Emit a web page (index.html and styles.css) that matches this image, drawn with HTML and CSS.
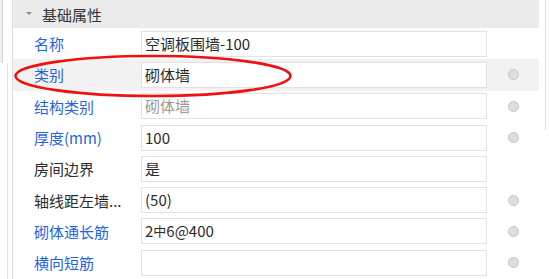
FILE: index.html
```html
<!DOCTYPE html>
<html lang="zh-CN">

<head>
  <meta charset="UTF-8">
  <meta name="viewport" content="width=device-width, initial-scale=1.0">
  <title>属性</title>
  <link rel="stylesheet" href="styles.css">
</head>

<body>

  <div class="page">
    <!-- 左侧边框 -->
    <div class="gutter">
      <div class="gutter-top"></div>
      <div class="gutter-line"></div>
    </div>

    <div class="panel">
      <div class="group-head">
        <span class="caret"></span>
        <span class="group-title">基础属性</span>
      </div>

      <div class="prop-row">
        <div class="prop-label link">名称</div>
        <div class="prop-value">空调板围墙-100</div>
        <div class="prop-flag"></div>
      </div>
      <div class="prop-row active">
        <div class="prop-label link">类别</div>
        <div class="prop-value">砌体墙</div>
        <div class="prop-flag"><span class="dot"></span></div>
      </div>
      <div class="prop-row">
        <div class="prop-label link">结构类别</div>
        <div class="prop-value disabled">砌体墙</div>
        <div class="prop-flag"><span class="dot"></span></div>
      </div>
      <div class="prop-row">
        <div class="prop-label link">厚度(mm)</div>
        <div class="prop-value">100</div>
        <div class="prop-flag"><span class="dot"></span></div>
      </div>
      <div class="prop-row">
        <div class="prop-label">房间边界</div>
        <div class="prop-value">是</div>
        <div class="prop-flag"></div>
      </div>
      <div class="prop-row">
        <div class="prop-label">轴线距左墙...</div>
        <div class="prop-value">(50)</div>
        <div class="prop-flag"><span class="dot"></span></div>
      </div>
      <div class="prop-row">
        <div class="prop-label link">砌体通长筋</div>
        <div class="prop-value">2<span class="steel">中</span>6@400</div>
        <div class="prop-flag"><span class="dot"></span></div>
      </div>
      <div class="prop-row">
        <div class="prop-label link">横向短筋</div>
        <div class="prop-value"></div>
        <div class="prop-flag"><span class="dot"></span></div>
      </div>

      <!-- 手绘的红圈标注 -->
      <svg class="mark" width="290" height="50" viewBox="0 0 290 50">
        <ellipse cx="144" cy="25" rx="137.5" ry="20" fill="none" stroke="#f01010" stroke-width="2.6" />
      </svg>
    </div>

    <!-- 右侧滚动条 -->
    <div class="scroll">
      <div class="scroll-line"></div>
    </div>
  </div>

</body>
</html>
```

FILE: styles.css
```css
body {
  margin: 0;
  background: #fff;
  font-family: "Noto Sans CJK SC", "Noto Sans", sans-serif;
  font-size: 15px;
  color: #333;
}

.page {
  display: flex;
  width: 549px;
  height: 279px;
  overflow: hidden;
}

.gutter {
  width: 12px;
  border-right: 1px solid #dedede;
  display: flex;
  flex-direction: column;
}

.gutter-top {
  width: 2px;
  height: 63px;
  background: #efefef;
  border-right: 1px solid #d8d8d8;
}

.gutter-line {
  width: 7px;
  flex: 1;
  border-right: 1px solid #e4e4e4;
}

.panel {
  position: relative;
  width: 526px;
}

.group-head {
  height: 28px;
  background: #ebebeb;
  display: flex;
  align-items: center;
  padding-left: 13px;
}

.caret {
  width: 0;
  height: 0;
  border-left: 3px solid transparent;
  border-right: 3px solid transparent;
  border-top: 3px solid #8a8a8a;
  margin-right: 10px;
  margin-top: -2px;
}

.group-title {
  color: #333;
}

.prop-row {
  height: 31.3px;
  display: grid;
  grid-template-columns: 128px 346px 1fr;
  align-items: center;
}

.prop-row.active {
  background: #f2f2f2;
}

.prop-label {
  padding-left: 21px;
  white-space: nowrap;
  color: #2b2b2b;
}

.prop-label.link {
  color: #1f65e0;
}

.prop-value {
  height: 26px;
  box-sizing: border-box;
  border: 1px solid #e2e2e2;
  background: #fff;
  padding-left: 3px;
  line-height: 24px;
  color: #2b2b2b;
  white-space: nowrap;
}

.prop-value.disabled {
  color: #9a9a9a;
}

.steel {
  font-size: 13px;
  vertical-align: 1px;
}

.prop-flag {
  display: flex;
  justify-content: center;
}

.dot {
  width: 9px;
  height: 9px;
  border-radius: 50%;
  background: #dedede;
  border: 1px solid #c6c6c6;
  margin-left: 1px;
}

.mark {
  position: absolute;
  left: -4px;
  top: 51px;
}

.scroll {
  width: 10px;
}

.scroll-line {
  width: 6px;
  height: 130px;
  border-right: 1px solid #e0e0e0;
}
```
